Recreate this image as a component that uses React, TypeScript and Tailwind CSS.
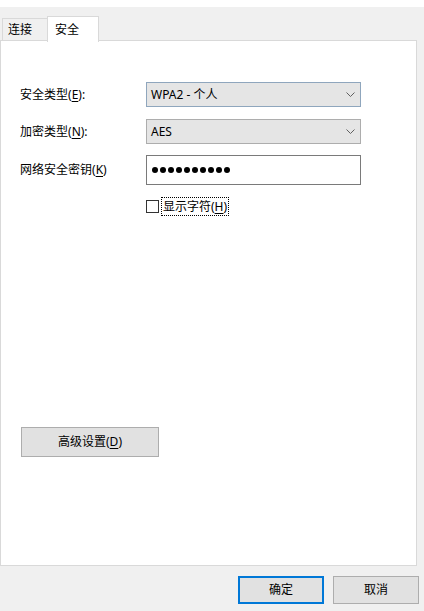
import React from "react";

const font = {
  fontFamily: "'Segoe UI', 'Noto Sans', 'Noto Sans CJK SC', sans-serif",
};

function Chevron() {
  return (
    <svg width="9" height="5" viewBox="0 0 9 5" className="shrink-0">
      <path d="M0.5 0.5 L4.5 4.5 L8.5 0.5" fill="none" stroke="#606060" strokeWidth="1" />
    </svg>
  );
}

function Select({ text, border }: { text: string; border: string }) {
  return (
    <div
      className={`w-[215px] h-[25px] flex items-center justify-between pl-[4px] pr-[5px] bg-[#e5e5e5] border ${border}`}
    >
      <span className="text-[12px] text-black leading-none">{text}</span>
      <Chevron />
    </div>
  );
}

function Label({ pre, k, post }: { pre: string; k: string; post: string }) {
  return (
    <div className="w-[145px] shrink-0 pl-[19px] text-[12px] text-black leading-none">
      {pre}(<span className="underline underline-offset-2">{k}</span>){post}
    </div>
  );
}

export default function App() {
  return (
    <div className="w-[424px] h-[611px] bg-[#f0f0f0] flex flex-col" style={font}>
      <div className="h-[7px] bg-white" />
      <div className="h-[34px] flex items-end pl-[2px] relative z-10">
        <div className="w-[46px] h-[22px] border border-b-0 border-[#d9d9d9] bg-[#f0f0f0] flex items-center pl-[5px] text-[12px] text-black mb-[1px]">
          连接
        </div>
        <div className="w-[52px] h-[26px] border border-b-0 border-[#d9d9d9] bg-white flex items-center pl-[7px] text-[12px] text-black -ml-[1px] -mb-[1px]">
          安全
        </div>
      </div>
      <div className="w-[417px] h-[526px] bg-white border border-[#d9d9d9] -mt-[1px] flex flex-col pt-[41px]">
        <div className="flex items-center">
          <Label pre="安全类型" k="E" post=":" />
          <Select text="WPA2 - 个人" border="border-[#8fa6bd]" />
        </div>
        <div className="flex items-center mt-[12px]">
          <Label pre="加密类型" k="N" post=":" />
          <Select text="AES" border="border-[#adadad]" />
        </div>
        <div className="flex items-center mt-[11px]">
          <Label pre="网络安全密钥" k="K" post="" />
          <div className="w-[215px] h-[30px] border border-[#7a7a7a] bg-white flex items-center pl-[5px] gap-[2px]">
            {Array.from({ length: 10 }).map((_, i) => (
              <div key={i} className="w-[6px] h-[6px] rounded-full bg-black" />
            ))}
          </div>
        </div>
        <div className="flex items-center mt-[12px] pl-[145px]">
          <div className="w-[13px] h-[13px] border border-[#333333] bg-white" />
          <div className="ml-[2px] h-[19px] px-[1px] border border-dotted border-black flex items-center text-[12px] text-black leading-none">
            显示字符(<span className="underline underline-offset-2">H</span>)
          </div>
        </div>
        <div className="mt-[211px] ml-[20px] w-[138px] h-[30px] bg-[#e1e1e1] border border-[#adadad] flex items-center justify-center text-[12px] text-black">
          高级设置(<span className="underline underline-offset-2">D</span>)
        </div>
      </div>
      <div className="flex justify-end mt-[10px] pr-[5px] gap-[9px]">
        <div className="w-[86px] h-[28px] bg-[#e1e1e1] border-2 border-[#0078d7] flex items-center justify-center text-[12px] text-black">
          确定
        </div>
        <div className="w-[86px] h-[28px] bg-[#e1e1e1] border border-[#adadad] flex items-center justify-center text-[12px] text-black">
          取消
        </div>
      </div>
    </div>
  );
}
